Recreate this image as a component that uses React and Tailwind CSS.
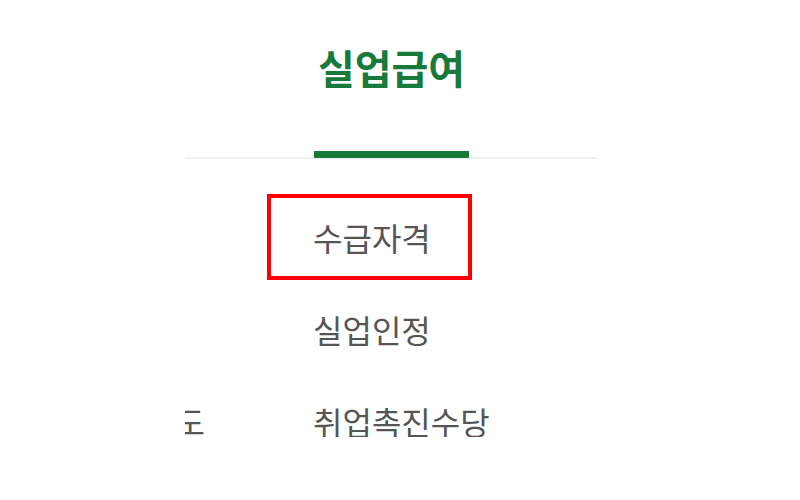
const MENU = [
  { side: "", label: "수급자격", marked: true },
  { side: "", label: "실업인정" },
  { side: "재취업지원제도", label: "취업촉진수당" },
];

export default function App() {
  return (
    <div className="w-[800px] h-[500px] bg-white overflow-hidden font-['Noto_Sans_CJK_KR','Noto_Sans',sans-serif]">
      <div className="ml-[185px] w-[413px] overflow-hidden">
        {/* tab header */}
        <div className="flex h-[159px] border-b-2 border-[#efefef]">
          <div className="w-[129px]" />
          <div className="w-[155px] flex flex-col items-center">
            <h2 className="pt-[47px] text-[40px] leading-none font-bold text-[#17793a]">
              실업급여
            </h2>
            <div className="mt-auto -mb-px h-[7px] w-full bg-[#17793a]" />
          </div>
        </div>

        {/* sub menu */}
        <ul className="grid grid-cols-[20px_1fr] gap-x-[108px] gap-y-[60px] pt-[62px] text-[32px] leading-none text-[#555]">
          {MENU.map(m => (
            <li key={m.label} className="contents">
              <span className="flex justify-end whitespace-nowrap">{m.side}</span>
              <span className="relative w-fit">
                {m.label}
                {m.marked && (
                  <span className="absolute -left-[46px] -top-[27px] w-[205px] h-[86px] border-[4px] border-[#ff0000]" />
                )}
              </span>
            </li>
          ))}
        </ul>
      </div>
    </div>
  );
}
